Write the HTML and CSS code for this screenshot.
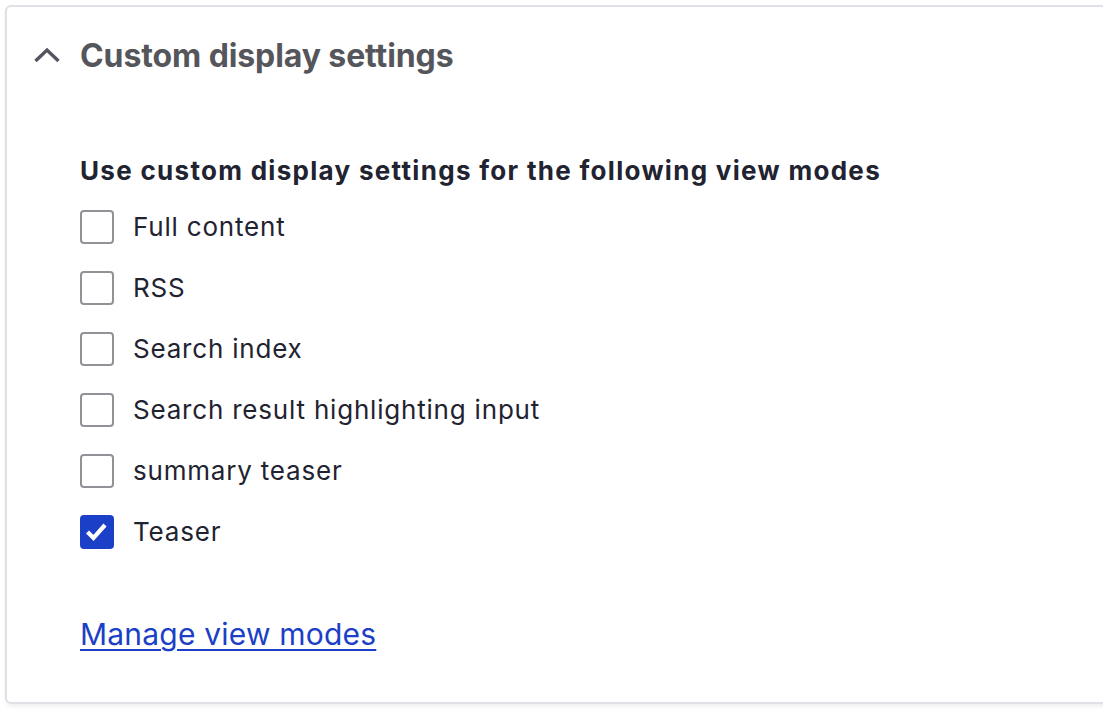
FILE: index.html
```html
<!DOCTYPE html>
<html>
<head>
<meta charset="utf-8">
<link rel="stylesheet" href="styles.css">
</head>
<body>
<div class="card">
  <div class="summary">
    <svg class="chev" width="28" height="16" viewBox="0 0 28 16"><path d="M2.5 14 L14 3 L25.5 14" fill="none" stroke="#545560" stroke-width="3.4"/></svg>
    <span class="title">Custom display settings</span>
  </div>
  <div class="body">
    <div class="label">Use custom display settings for the following view modes</div>
    <ul class="opts">
      <li><span class="box"></span><span>Full content</span></li>
      <li><span class="box"></span><span>RSS</span></li>
      <li><span class="box"></span><span>Search index</span></li>
      <li><span class="box"></span><span>Search result highlighting input</span></li>
      <li><span class="box"></span><span>summary teaser</span></li>
      <li><span class="box checked"><svg width="34" height="34" viewBox="0 0 34 34"><path d="M7.5 17 L13.5 23 L25 10" fill="none" stroke="#fff" stroke-width="4.2"/></svg></span><span>Teaser</span></li>
    </ul>
    <a class="link" href="#">Manage view modes</a>
  </div>
</div>
</body>
</html>
```
FILE: styles.css
```css
html, body { margin: 0; padding: 0; background: #fff; }
body { font-family: Inter, "Noto Sans", sans-serif; color: #222330; overflow: hidden; width: 1103px; height: 709px; }
.card {
  margin: 5px 0 0 5px;
  width: 1140px;
  height: 699px;
  box-sizing: border-box;
  border: 2px solid #e0e0e6;
  border-radius: 6px;
  box-shadow: 0 3px 4px rgba(0,0,0,0.06);
  background: #fff;
}
.summary { display: flex; align-items: center; height: 98px; padding-left: 26px; box-sizing: border-box; padding-bottom: 2px; }
.chev { display: block; margin-right: 19px; }
.title { font-size: 32px; font-weight: 700; color: #55565b; letter-spacing: -0.1px; }
.body { padding: 51px 0 0 73px; }
.label { font-size: 26px; font-weight: 700; color: #222330; line-height: 30px; letter-spacing: 1.3px; }
.opts { list-style: none; margin: 10px 0 0 0; padding: 0; }
.opts li { display: flex; align-items: center; height: 61px; font-size: 26px; letter-spacing: 0.8px; }
.box { width: 34px; height: 34px; box-sizing: border-box; border: 2px solid #919297; border-radius: 4px; margin-right: 19px; flex: none; }
.box.checked { background: #1b3fc6; border-color: #1b3fc6; }
.box.checked svg { display: block; margin: -2px; }
.link { display: inline-block; margin-top: 54px; font-size: 30px; letter-spacing: 0.2px; color: #1b3fc6; text-decoration: underline; text-underline-offset: 4px; text-decoration-thickness: 2px; }
```
